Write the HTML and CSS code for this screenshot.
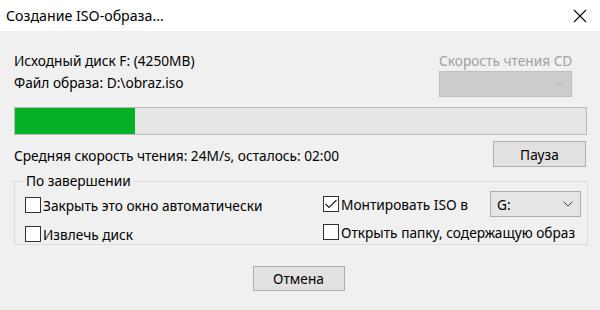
FILE: index.html
```html
<!DOCTYPE html>
<html lang="ru">
<head>
<meta charset="utf-8">
<title>Создание ISO-образа...</title>
<link rel="stylesheet" href="styles.css">
</head>
<body>
<div class="window">
  <div class="titlebar">
    <span class="title">Создание ISO-образа...</span>
    <span class="close">
      <svg width="14" height="14" viewBox="0 0 14 14"><path d="M1 1L13 13M13 1L1 13" stroke="#111" stroke-width="1.2" fill="none"/></svg>
    </span>
  </div>
  <div class="content">
    <div class="top">
      <div class="info">
        <div class="line">Исходный диск F: (4250MB)</div>
        <div class="line">Файл образа: D:\obraz.iso</div>
      </div>
      <div class="speed">
        <div class="speed-label">Скорость чтения CD</div>
        <div class="combo combo-disabled">
          <span class="combo-text"></span>
          <svg class="chev" width="10" height="6" viewBox="0 0 10 6"><path d="M0.5 0.5L5 5L9.5 0.5" stroke="#b4b4b4" stroke-width="1" fill="none"/></svg>
        </div>
      </div>
    </div>
    <div class="progress"><div class="progress-fill" style="width:21%"></div></div>
    <div class="status">
      <span class="status-text">Средняя скорость чтения: 24M/s, осталось: 02:00</span>
      <button class="btn btn-pause">Пауза</button>
    </div>
    <fieldset class="group">
      <legend class="legend">По завершении</legend>
      <div class="group-cols">
        <div class="col col-left">
          <label class="check"><span class="box"></span><span>Закрыть это окно автоматически</span></label>
          <label class="check"><span class="box"></span><span>Извлечь диск</span></label>
        </div>
        <div class="col col-right">
          <div class="mount-row">
            <label class="check"><span class="box"><svg width="14" height="14" viewBox="0 0 14 14"><path d="M1.5 7L5 10.5L12.5 3" stroke="#222" stroke-width="1.2" fill="none"/></svg></span><span>Монтировать ISO в</span></label>
            <div class="combo combo-drive">
              <span class="combo-text">G:</span>
              <svg class="chev" width="10" height="6" viewBox="0 0 10 6"><path d="M0.5 0.5L5 5L9.5 0.5" stroke="#444" stroke-width="1" fill="none"/></svg>
            </div>
          </div>
          <label class="check check-open"><span class="box"></span><span>Открыть папку, содержащую образ</span></label>
        </div>
      </div>
    </fieldset>
    <div class="footer">
      <button class="btn btn-cancel">Отмена</button>
    </div>
  </div>
</div>
</body>
</html>
```
FILE: styles.css
```css
* { box-sizing: border-box; }
html, body { margin: 0; padding: 0; }
body {
  width: 600px;
  height: 310px;
  overflow: hidden;
  background: #f0f0f0;
  font-family: "Noto Sans", "Open Sans", sans-serif;
  font-size: 13.7px;
  color: #000;
}
.window { width: 600px; height: 310px; background: #f0f0f0; }
.titlebar {
  height: 31px;
  background: #fff;
  display: flex;
  align-items: center;
  justify-content: space-between;
  padding: 0 13px 0 6px;
}
.title { font-size: 14.2px; color: #000; }
.close { display: flex; width: 14px; height: 14px; }
.content { padding: 0 13px 0 14px; }
.top {
  display: flex;
  justify-content: space-between;
  padding-top: 19px;
  height: 66px;
}
.line { height: 22px; line-height: 22px; white-space: nowrap; }
.speed { width: 146px; margin-right: 2px; display: flex; flex-direction: column; }
.speed-label { height: 21px; line-height: 21px; color: #a0a0a0; white-space: nowrap; }
.combo {
  height: 26px;
  display: flex;
  align-items: center;
  justify-content: space-between;
  padding: 0 7px 0 6px;
  border: 1px solid #adadad;
  background: #e5e5e5;
}
.combo-disabled {
  width: 133px;
  background: #cccccc;
  border-color: #bfbfbf;
}
.progress {
  margin-top: 10px;
  height: 28px;
  width: 573px;
  border: 1px solid #bcbcbc;
  background: #e6e6e6;
  padding: 0;
}
.progress-fill { height: 100%; background: #06b025; }
.status {
  display: flex;
  align-items: center;
  justify-content: space-between;
  margin-top: 6px;
  width: 572px;
}
.status-text { padding-top: 3px; white-space: nowrap; }
.btn {
  font: inherit;
  color: #000;
  background: #e1e1e1;
  border: 1px solid #adadad;
  height: 26px;
  padding: 0;
  border-radius: 0;
}
.btn-pause { width: 93px; }
.group {
  margin: 6px 0 0 0;
  width: 574px;
  height: 72px;
  border: 1px solid #dcdcdc;
  padding: 0 0 0 10px;
}
.legend { padding: 0 1px; margin-left: 0; line-height: 16px; }
.group-cols { display: flex; }
.col { display: flex; flex-direction: column; }
.col-left { width: 298px; padding-top: 8px; gap: 13px; }
.col-right { padding-top: 2px; }
.check { display: flex; align-items: center; gap: 2px; height: 16px; white-space: nowrap; }
.box {
  flex: none;
  width: 16px;
  height: 16px;
  border: 1px solid #333;
  background: #fff;
  display: flex;
  align-items: center;
  justify-content: center;
}
.mount-row { display: flex; align-items: center; gap: 0; height: 26px; }
.mount-row .check { width: 167px; }
.combo-drive { width: 91px; }
.check-open { margin-top: 7px; }
.footer { display: flex; justify-content: center; margin-top: 21px; padding-right: 4px; }
.btn-cancel { width: 92px; height: 25px; }
```
